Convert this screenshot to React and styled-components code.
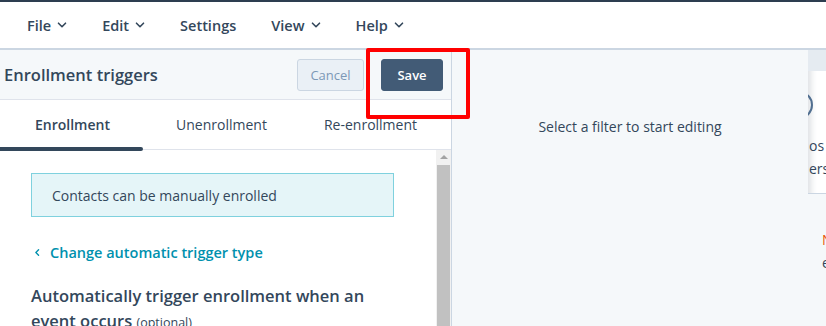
import React from "react";
import styled, { createGlobalStyle } from "styled-components";

const GlobalStyle = createGlobalStyle`
  *, *::before, *::after {
    box-sizing: border-box;
  }
  body {
    margin: 0;
    font-family: "Open Sans", "Noto Sans", Arial, sans-serif;
    color: #33475b;
  }
`;

const Page = styled.div`
  position: relative;
  width: 826px;
  height: 326px;
  overflow: hidden;
  display: flex;
  flex-direction: column;
  background: #fff;
  border-top: 2px solid #2d3e50;
`;

const MenuBar = styled.div`
  height: 46px;
  display: flex;
  align-items: center;
  gap: 35px;
  padding-left: 27px;
  flex-shrink: 0;
`;

const MenuItem = styled.div`
  display: flex;
  align-items: center;
  gap: 6px;
  font-size: 14.5px;
  font-weight: 600;
  color: #33475b;
`;

const Main = styled.div`
  flex: 1;
  display: flex;
  border-top: 2px solid #cbd6e2;
  background: #f5f8fa;
  min-height: 0;
`;

const LeftPanel = styled.div`
  width: 452px;
  display: flex;
  flex-direction: column;
  border-right: 1px solid #cbd6e2;
  background: #fff;
`;

const PanelHeader = styled.div`
  height: 50px;
  display: flex;
  align-items: center;
  padding: 0 8px 0 4px;
  background: #f5f8fa;
  border-bottom: 1px solid #dfe3eb;
  flex-shrink: 0;
`;

const Title = styled.h2`
  margin: 0;
  flex: 1;
  font-size: 16.5px;
  font-weight: 600;
  color: #33475b;
`;

const Button = styled.button`
  height: 32px;
  width: ${(p) => (p.primary ? "62px" : "67px")};
  padding: 0;
  margin-left: ${(p) => (p.primary ? "17px" : "0")};
  border-radius: 3px;
  font-family: inherit;
  font-size: 13px;
  font-weight: ${(p) => (p.primary ? 600 : 400)};
  border: 1px solid ${(p) => (p.primary ? "#425b76" : "#cbd6e2")};
  background: ${(p) => (p.primary ? "#425b76" : "#eaf0f6")};
  color: ${(p) => (p.primary ? "#fff" : "#7c98b6")};
`;

const Tabs = styled.div`
  height: 50px;
  display: flex;
  border-bottom: 1px solid #dfe3eb;
  flex-shrink: 0;
`;

const Tab = styled.div`
  position: relative;
  width: 145px;
  display: flex;
  align-items: center;
  justify-content: center;
  font-size: 14px;
  font-weight: ${(p) => (p.active ? 600 : 400)};
  color: #33475b;
  &:nth-child(2) {
    width: 153px;
  }
  &::after {
    content: "";
    display: ${(p) => (p.active ? "block" : "none")};
    position: absolute;
    left: 0;
    right: 2px;
    bottom: -2px;
    height: 4px;
    border-radius: 0 2px 2px 0;
    background: #33475b;
  }
`;

const Body = styled.div`
  flex: 1;
  display: flex;
  min-height: 0;
`;

const Content = styled.div`
  flex: 1;
  padding: 23px 42px 0 31px;
`;

const Scrollbar = styled.div`
  width: 15px;
  background: #f1f1f1;
  display: flex;
  flex-direction: column;
  align-items: center;
`;

const ScrollArrow = styled.div`
  margin-top: 5px;
  width: 0;
  height: 0;
  border-left: 4px solid transparent;
  border-right: 4px solid transparent;
  border-bottom: 4px solid #a3a3a3;
`;

const ScrollThumb = styled.div`
  margin-top: 6px;
  width: 13px;
  flex: 1;
  background: #c1c1c1;
`;

const InfoBox = styled.div`
  height: 44px;
  display: flex;
  align-items: center;
  padding-left: 20px;
  background: #e5f5f8;
  border: 1px solid #7fd1de;
  font-size: 14px;
  color: #33475b;
`;

const BackLink = styled.a`
  display: flex;
  align-items: center;
  gap: 8px;
  margin-top: 26px;
  padding-left: 2px;
  font-size: 14.5px;
  font-weight: 600;
  color: #0091ae;
`;

const SectionHeading = styled.h3`
  margin: 21px 0 0;
  font-size: 16.5px;
  font-weight: 600;
  line-height: 25px;
  color: #33475b;
`;

const Optional = styled.span`
  font-size: 12.5px;
  font-weight: 400;
`;

const Editor = styled.div`
  flex: 1;
  display: flex;
  justify-content: center;
  padding-top: 67px;
  font-size: 14px;
  color: #33475b;
`;

const Backdrop = styled.div`
  width: 18px;
  display: flex;
  flex-direction: column;
  background: #fff;
  box-shadow: inset 7px 0 6px -4px rgba(45, 62, 80, 0.16);
  overflow: hidden;
  font-size: 14px;
  color: #33475b;
`;

const BackdropHeader = styled.div`
  height: 21px;
  flex-shrink: 0;
  background: #e5ebf1;
`;

const BackdropCard = styled.div`
  height: 123px;
  flex-shrink: 0;
  border-bottom: 1px solid #cbd6e2;
  position: relative;
  padding: 63px 0 0 1px;
  line-height: 23px;
  white-space: nowrap;
`;

const Ring = styled.div`
  position: absolute;
  left: -23px;
  top: 20px;
  width: 28px;
  height: 28px;
  border: 2px solid #516f90;
  border-radius: 50%;
`;

const BackdropLower = styled.div`
  flex: 1;
  background: #f5f8fa;
  padding: 34px 0 0 14px;
  line-height: 23px;
  white-space: nowrap;
`;

const Annotation = styled.div`
  position: absolute;
  left: 366px;
  top: 46px;
  width: 104px;
  height: 71px;
  border: 4px solid #ff0000;
  border-radius: 2px;
  pointer-events: none;
`;

const Chevron = ({ dir = "down", color = "#33475b", size = 10 }) => (
  <svg width={size} height={size} viewBox="0 0 10 10" fill="none">
    {dir === "down" ? (
      <path d="M1.5 3.2L5 6.7L8.5 3.2" stroke={color} strokeWidth="1.6" strokeLinecap="round" strokeLinejoin="round" />
    ) : (
      <path d="M6.2 2L3.2 5L6.2 8" stroke={color} strokeWidth="1.5" strokeLinecap="round" strokeLinejoin="round" />
    )}
  </svg>
);

const menu = [
  { label: "File", caret: true },
  { label: "Edit", caret: true },
  { label: "Settings", caret: false },
  { label: "View", caret: true },
  { label: "Help", caret: true },
];

export default function App() {
  return (
    <>
      <GlobalStyle />
      <Page>
        <MenuBar>
          {menu.map((m) => (
            <MenuItem key={m.label}>
              {m.label}
              {m.caret && <Chevron />}
            </MenuItem>
          ))}
        </MenuBar>
        <Main>
          <LeftPanel>
            <PanelHeader>
              <Title>Enrollment triggers</Title>
              <Button>Cancel</Button>
              <Button primary>Save</Button>
            </PanelHeader>
            <Tabs>
              <Tab active>Enrollment</Tab>
              <Tab>Unenrollment</Tab>
              <Tab>Re-enrollment</Tab>
            </Tabs>
            <Body>
              <Content>
                <InfoBox>Contacts can be manually enrolled</InfoBox>
                <BackLink>
                  <Chevron dir="left" color="#0091ae" size={9} />
                  Change automatic trigger type
                </BackLink>
                <SectionHeading>
                  Automatically trigger enrollment when an event occurs{" "}
                  <Optional>(optional)</Optional>
                </SectionHeading>
              </Content>
              <Scrollbar>
                <ScrollArrow />
                <ScrollThumb />
              </Scrollbar>
            </Body>
          </LeftPanel>
          <Editor>Select a filter to start editing</Editor>
          <Backdrop>
            <BackdropHeader />
            <BackdropCard>
              <Ring />
              os
              <br />
              ers
            </BackdropCard>
            <BackdropLower>
              <span style={{ color: "#e8590c" }}>N</span>
              <br />e
            </BackdropLower>
          </Backdrop>
        </Main>
        <Annotation />
      </Page>
    </>
  );
}
